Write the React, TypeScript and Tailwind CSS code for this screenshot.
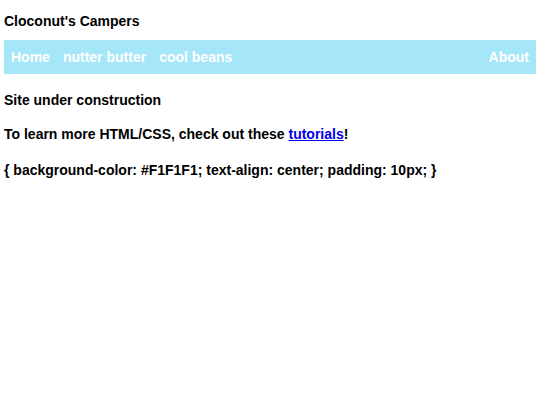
export default function App() {
  return (
    <div className="min-h-[405px] bg-white px-[4px] pt-[12px] text-[14px] font-bold text-black [font-family:'Comic_Sans_MS','Liberation_Sans',sans-serif]">
      <h1 className="leading-[18px]">Cloconut's Campers</h1>

      <nav className="mt-[10px] flex h-[34px] items-center justify-between bg-[#a5e7f9] px-[7px] text-white">
        <div className="flex gap-[13px]">
          <a href="#">Home</a>
          <a href="#">nutter butter</a>
          <a href="#">cool beans</a>
        </div>
        <a href="#">About</a>
      </nav>

      <p className="mt-[17px] leading-[18px]">Site under construction</p>

      <p className="mt-[16px] leading-[18px]">
        To learn more HTML/CSS, check out these{" "}
        <a href="#" className="text-[#0000ee] underline">
          tutorials
        </a>
        !
      </p>

      <p className="mt-[18px] leading-[18px]">
        {"{ background-color: #F1F1F1; text-align: center; padding: 10px; }"}
      </p>
    </div>
  );
}
